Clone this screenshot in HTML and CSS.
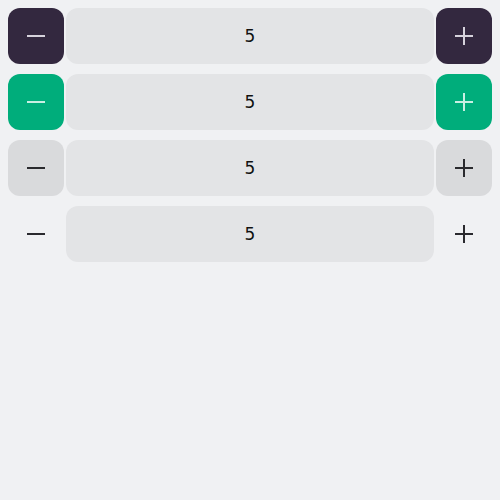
FILE: index.html
```html
<!DOCTYPE html>
<html>
<head>
<meta charset="utf-8">
<link rel="stylesheet" href="styles.css">
</head>
<body>
<div class="list">
  <div class="stepper">
    <button class="btn dark" aria-label="Decrease"><svg viewBox="0 0 18 18"><path d="M0 9H18"/></svg></button>
    <div class="value">5</div>
    <button class="btn dark" aria-label="Increase"><svg viewBox="0 0 18 18"><path d="M0 9H18M9 0V18"/></svg></button>
  </div>
  <div class="stepper">
    <button class="btn green" aria-label="Decrease"><svg viewBox="0 0 18 18"><path d="M0 9H18"/></svg></button>
    <div class="value">5</div>
    <button class="btn green" aria-label="Increase"><svg viewBox="0 0 18 18"><path d="M0 9H18M9 0V18"/></svg></button>
  </div>
  <div class="stepper">
    <button class="btn gray" aria-label="Decrease"><svg viewBox="0 0 18 18"><path d="M0 9H18"/></svg></button>
    <div class="value">5</div>
    <button class="btn gray" aria-label="Increase"><svg viewBox="0 0 18 18"><path d="M0 9H18M9 0V18"/></svg></button>
  </div>
  <div class="stepper">
    <button class="btn ghost" aria-label="Decrease"><svg viewBox="0 0 18 18"><path d="M0 9H18"/></svg></button>
    <div class="value">5</div>
    <button class="btn ghost" aria-label="Increase"><svg viewBox="0 0 18 18"><path d="M0 9H18M9 0V18"/></svg></button>
  </div>
</div>
</body>
</html>
```
FILE: styles.css
```css
html, body {
  margin: 0;
  background: #f0f1f3;
}
body {
  padding: 8px;
  font-family: "DejaVu Sans", sans-serif;
}
.list {
  display: flex;
  flex-direction: column;
  gap: 10px;
}
.stepper {
  display: flex;
  gap: 2px;
  width: 484px;
  height: 56px;
}
.btn {
  width: 56px;
  height: 56px;
  flex: 0 0 56px;
  border: none;
  border-radius: 12px;
  padding: 0;
  display: flex;
  align-items: center;
  justify-content: center;
  background: transparent;
}
.btn svg {
  width: 18px;
  height: 18px;
  fill: none;
  stroke-width: 2;
}
.dark { background: #33283f; }
.dark svg { stroke: #d6d2dc; }
.green { background: #00ad7b; }
.green svg { stroke: #c9efe3; }
.gray { background: #d9dadc; }
.gray svg { stroke: #2a2a2e; }
.ghost svg { stroke: #2a2a2e; }
.value {
  flex: 1;
  background: #e3e4e6;
  border-radius: 12px;
  display: flex;
  align-items: center;
  justify-content: center;
  font-size: 17px;
  color: #111;
}
```
